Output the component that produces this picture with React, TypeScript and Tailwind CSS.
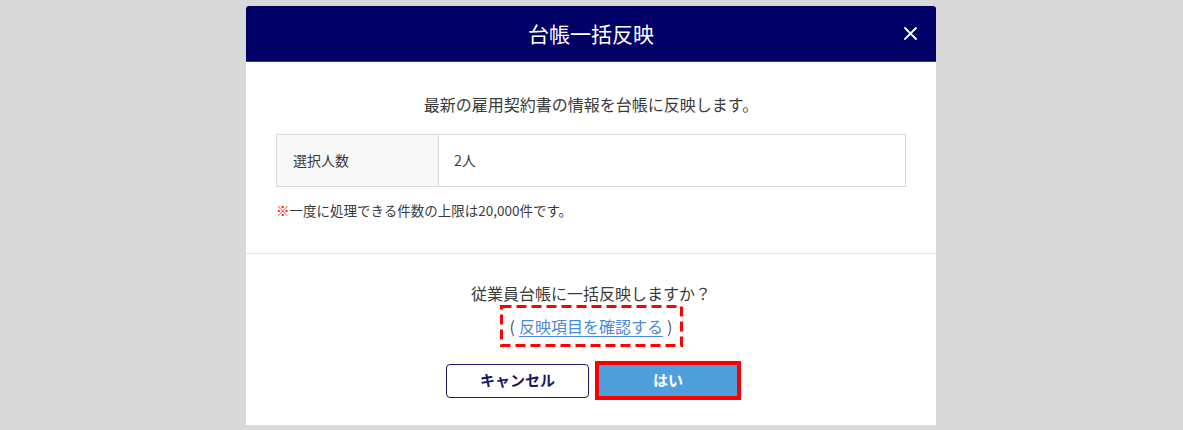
import React from "react"

const font = { fontFamily: '"Noto Sans CJK JP", "Noto Sans", sans-serif' }

function CloseIcon() {
  return (
    <svg width="13" height="13" viewBox="0 0 13 13" className="block">
      <path d="M1 1 L12 12 M12 1 L1 12" stroke="#ffffff" strokeWidth="1.8" strokeLinecap="round" />
    </svg>
  )
}

// red dashed annotation frame drawn over the link
function DashedFrame() {
  return (
    <svg className="pointer-events-none absolute inset-0" width="183" height="42">
      <rect
        x="1.5"
        y="1.5"
        width="180"
        height="39"
        fill="none"
        stroke="#ff0000"
        strokeWidth="3"
        strokeDasharray="10 5"
      />
    </svg>
  )
}

export default function App() {
  return (
    <div className="h-[430px] w-full bg-[#d9d9d9] pt-[6px]" style={font}>
      <div className="ml-[246px] w-[690px] overflow-hidden rounded-t-[3px] bg-white">
        {/* header */}
        <div className="relative flex h-[56px] items-center justify-center border-b border-[#3b3b85] bg-[#000066]">
          <span className="text-[21px] text-white">台帳一括反映</span>
          <button className="absolute right-[19px] top-[21px]">
            <CloseIcon />
          </button>
        </div>

        {/* body */}
        <div className="px-[30px] pb-[33px] pt-[31px]">
          <p className="text-center text-[16px] leading-[22px] text-[#3a3a3a]">
            最新の雇用契約書の情報を台帳に反映します。
          </p>
          <div className="mt-[19px] flex h-[53px] border border-[#d9d9d9] text-[14px] text-[#3a3a3a]">
            <div className="flex w-[162px] items-center border-r border-[#d9d9d9] bg-[#f8f8f8] pl-[16px]">
              選択人数
            </div>
            <div className="flex items-center pl-[15px]">2人</div>
          </div>
          <p className="mt-[14px] text-[13.5px] leading-[19px] text-[#3a3a3a]">
            <span className="font-bold text-[#ff0000]">※</span>一度に処理できる件数の上限は20,000件です。
          </p>
        </div>

        <div className="h-px bg-[#e6e6e6]" />

        {/* footer */}
        <div className="flex flex-col items-center pb-[25px] pt-[28px]">
          <p className="text-[16px] leading-[22px] text-[#3a3a3a]">従業員台帳に一括反映しますか？</p>
          <div className="relative mt-[1px] flex h-[42px] w-[183px] items-center justify-center text-[16px] text-[#555555]">
            <span>(</span>
            <a href="#" className="mx-[4px] text-[#4a8ad8] underline underline-offset-[3px]">
              反映項目を確認する
            </a>
            <span>)</span>
            <DashedFrame />
          </div>
          <div className="ml-[5px] mt-[14px] flex items-center gap-[6px]">
            <button className="h-[34px] w-[143px] rounded-[4px] border border-[#1a1a66] bg-white text-[15px] font-bold text-[#1a1a5e]">
              キャンセル
            </button>
            <button className="h-[39px] w-[146px] border-4 border-[#ff0000] bg-[#4f9fdc] text-[15px] font-bold text-white">
              はい
            </button>
          </div>
        </div>
      </div>
    </div>
  )
}
